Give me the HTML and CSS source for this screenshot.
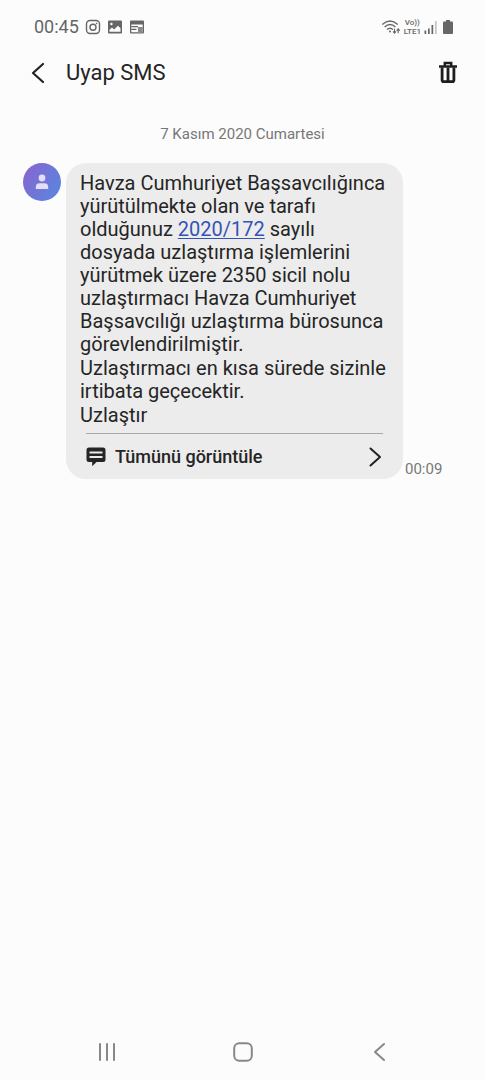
FILE: index.html
```html
<!DOCTYPE html>
<html lang="tr">
<head>
<meta charset="utf-8">
<meta name="viewport" content="width=device-width, initial-scale=1">
<title>Uyap SMS</title>
<link rel="stylesheet" href="styles.css">
</head>
<body>
<div class="screen">
  <div class="status">
    <div class="status-left">
      <span class="clock">00:45</span>
      <svg width="16" height="16" viewBox="0 0 16 16" fill="none" stroke="#666" stroke-width="1.4"><rect x="1.5" y="1.5" width="13" height="13" rx="3.5"/><circle cx="8" cy="8.2" r="3"/><circle cx="11.6" cy="4.4" r=".5" fill="#666" stroke-width=".7"/></svg>
      <svg width="16" height="16" viewBox="0 0 16 16"><rect x="1" y="1.5" width="14" height="13" rx="1" fill="#666"/><circle cx="4.4" cy="5" r="1.2" fill="#fcfcfc"/><path d="M2.5 12.8V10.8L5 8.6L7 10.4L11 6.8L13.5 9.2V12.8Z" fill="#fcfcfc"/></svg>
      <svg width="16" height="16" viewBox="0 0 16 16"><path fill="#666" fill-rule="evenodd" d="M2 1.5H14Q15 1.5 15 2.5V13.5Q15 14.5 14 14.5H2Q1 14.5 1 13.5V2.5Q1 1.5 2 1.5ZM2.3 5.4V13.2H13.7V5.4Z"/><path d="M2.3 7.6H9M2.3 10.4H7.5" stroke="#666" stroke-width="1.2"/><path d="M9 8H13.7V13.2H9Z" fill="#888"/></svg>
    </div>
    <div class="status-right">
      <svg width="20" height="16" viewBox="0 0 20 16" fill="none" stroke="#666" stroke-width="1.4"><path d="M1.3 5.4Q9 -1.4 16.7 5.4M3.6 8Q9 3.1 14.4 8M6 10.6Q9 7.8 12 10.6"/><circle cx="9" cy="12.6" r="1" fill="#666" stroke="none"/><path stroke-width="1.1" d="M13.5 9.8V14M12 12.4L13.5 14.2L15 12.4M17.2 14.2V10M15.7 11.6L17.2 9.8L18.7 11.6"/></svg>
      <span class="volte"><span>Vo))</span><span>LTE1</span></span>
      <svg width="14" height="16" viewBox="0 0 14 16" fill="#666"><path d="M0.5 11.5H2.2V15H0.5ZM4 9.5H5.7V15H4ZM7.5 6H9.2V15H7.5Z"/><path d="M11 2H12.7V15H11Z" fill="#c4c4c4"/></svg>
      <svg class="battery" width="12" height="16" viewBox="0 0 12 16" fill="#666"><path d="M4 1H8V2.5H10Q11 2.5 11 3.5V14Q11 15 10 15H2Q1 15 1 14V3.5Q1 2.5 2 2.5H4Z"/></svg>
    </div>
  </div>

  <header class="bar">
    <button class="icon-button" type="button" aria-label="Geri"><svg width="16" height="22" viewBox="0 0 16 22" fill="none" stroke="#222" stroke-width="2.2" stroke-linecap="round" stroke-linejoin="round"><path d="M13 2L3 11L13 20"/></svg></button>
    <h1 class="title">Uyap SMS</h1>
    <button class="icon-button" type="button" aria-label="Sil"><svg width="20" height="24" viewBox="0 0 20 24" fill="none" stroke="#1d1d1d"><path d="M1 5.5H19M6.8 5V2H13.2V5" stroke-width="2.4"/><path d="M4.1 6.5V19Q4.1 20.7 5.8 20.7H14.2Q15.9 20.7 15.9 19V6.5M10 6.5V20" stroke-width="2.8"/></svg></button>
  </header>

  <main class="thread">
    <p class="date">7 Kasım 2020 Cumartesi</p>
    <div class="message">
      <svg class="avatar" viewBox="0 0 38 38"><defs><linearGradient id="purple" x1="0" y1="0" x2="1" y2=".6"><stop offset="0" stop-color="#8b62cf"/><stop offset="1" stop-color="#5c84dd"/></linearGradient></defs><circle cx="19" cy="19" r="19" fill="url(#purple)"/><circle cx="19" cy="15" r="3.4" fill="#e6dcf6"/><path d="M12.8 26V24Q12.8 20.2 16.6 20.2H21.4Q25.2 20.2 25.2 24V26Z" fill="#e6dcf6"/></svg>
      <article class="bubble">
        <div class="text">
          <p>Havza Cumhuriyet Başsavcılığınca yürütülmekte olan ve tarafı olduğunuz <a href="#">2020/172</a> sayılı dosyada uzlaştırma işlemlerini yürütmek üzere 2350 sicil nolu uzlaştırmacı Havza Cumhuriyet Başsavcılığı uzlaştırma bürosunca görevlendirilmiştir.</p>
          <p>Uzlaştırmacı en kısa sürede sizinle irtibata geçecektir.</p>
          <p>Uzlaştır</p>
        </div>
        <button class="view-all" type="button">
          <svg width="20" height="20" viewBox="0 0 20 20"><path d="M3 .5H17Q19.5 .5 19.5 3V12.5Q19.5 15 17 15H10.5L6.2 19.3V15H3Q.5 15 .5 12.5V3Q.5 .5 3 .5Z" fill="#252525"/><path d="M3.5 5.5H16.5M3.5 10H16.5" stroke="#ececec" stroke-width="1.8"/></svg>
          <span class="view-label">Tümünü görüntüle</span>
          <svg width="14" height="20" viewBox="0 0 14 20" fill="none" stroke="#222" stroke-width="2" stroke-linecap="round" stroke-linejoin="round"><path d="M2.5 1.5L12 10L2.5 18.5"/></svg>
        </button>
      </article>
      <time class="time">00:09</time>
    </div>
  </main>

  <nav class="nav">
    <button class="nav-button" type="button" aria-label="Son uygulamalar"><svg width="20" height="20" viewBox="0 0 20 20" stroke="#888" stroke-width="2" stroke-linecap="round"><path d="M3 2V18M10 2V18M17 2V18"/></svg></button>
    <button class="nav-button" type="button" aria-label="Ana ekran"><svg width="20" height="20" viewBox="0 0 20 20" fill="none" stroke="#888" stroke-width="2"><rect x="1.2" y="1.2" width="17.6" height="17.6" rx="5"/></svg></button>
    <button class="nav-button" type="button" aria-label="Geri dön"><svg width="20" height="20" viewBox="0 0 20 20" fill="none" stroke="#888" stroke-width="2" stroke-linecap="round" stroke-linejoin="round"><path d="M15 2L6 10L15 18"/></svg></button>
  </nav>
</div>
</body>
</html>
```

FILE: styles.css
```css
* {
  box-sizing: border-box;
}

body {
  margin: 0;
  background: #fcfcfc;
  color: #252525;
  font-family: Roboto, "Noto Sans", sans-serif;
}

h1,
p {
  margin: 0;
}

button {
  padding: 0;
  border: 0;
  background: none;
  color: inherit;
  font: inherit;
  cursor: pointer;
}

svg {
  display: block;
  flex: none;
}

.screen {
  display: flex;
  flex-direction: column;
  min-height: 100vh;
}

.status {
  display: flex;
  justify-content: space-between;
  padding: 16px 32px 0 34px;
  color: #666;
}

.status-left,
.status-right {
  display: flex;
  align-items: center;
  height: 22px;
}

.status-left {
  gap: 6px;
}

.status-right {
  gap: 3px;
}

.battery {
  margin-left: 1px;
}

.clock {
  font-size: 18px;
  line-height: 22px;
}

.volte {
  display: flex;
  flex-direction: column;
  align-items: center;
  font-size: 8px;
  font-weight: 500;
  line-height: 9px;
}

.bar {
  display: flex;
  align-items: center;
  padding: 20px 28px 0 30px;
}

.icon-button {
  display: flex;
}

.title {
  flex: 1;
  margin-left: 20px;
  font-size: 22px;
  font-weight: 400;
  line-height: 30px;
}

.thread {
  flex: 1;
  padding: 36px 24px 0 23px;
}

.date {
  color: #777;
  font-size: 15px;
  line-height: 20px;
  text-align: center;
}

.message {
  display: flex;
  align-items: flex-start;
  margin-top: 19px;
}

.avatar {
  width: 38px;
  height: 38px;
}

.bubble {
  flex: 1;
  max-width: 337px;
  margin-left: 5px;
  padding: 9px 14px 0;
  border-radius: 20px;
  background: #ececec;
}

.text {
  display: flex;
  flex-direction: column;
  gap: 1px;
  font-size: 20px;
  line-height: 23px;
}

.text a {
  color: #3553b5;
  text-underline-offset: 2px;
  text-decoration-thickness: 1px;
}

.view-all {
  display: flex;
  align-items: center;
  width: calc(100% - 12px);
  height: 46px;
  margin: 6px 6px 0;
  padding-right: 1px;
  border-top: 1px solid #a8a8a8;
  text-align: left;
}

.view-label {
  flex: 1;
  margin-left: 9px;
  font-size: 18px;
  font-weight: 500;
  line-height: 22px;
}

.time {
  align-self: flex-end;
  margin-left: 2px;
  color: #777;
  font-size: 15px;
  line-height: 20px;
}

.nav {
  display: flex;
  justify-content: center;
  gap: 116px;
  padding: 18px 0;
}

.nav-button {
  display: flex;
}
```
